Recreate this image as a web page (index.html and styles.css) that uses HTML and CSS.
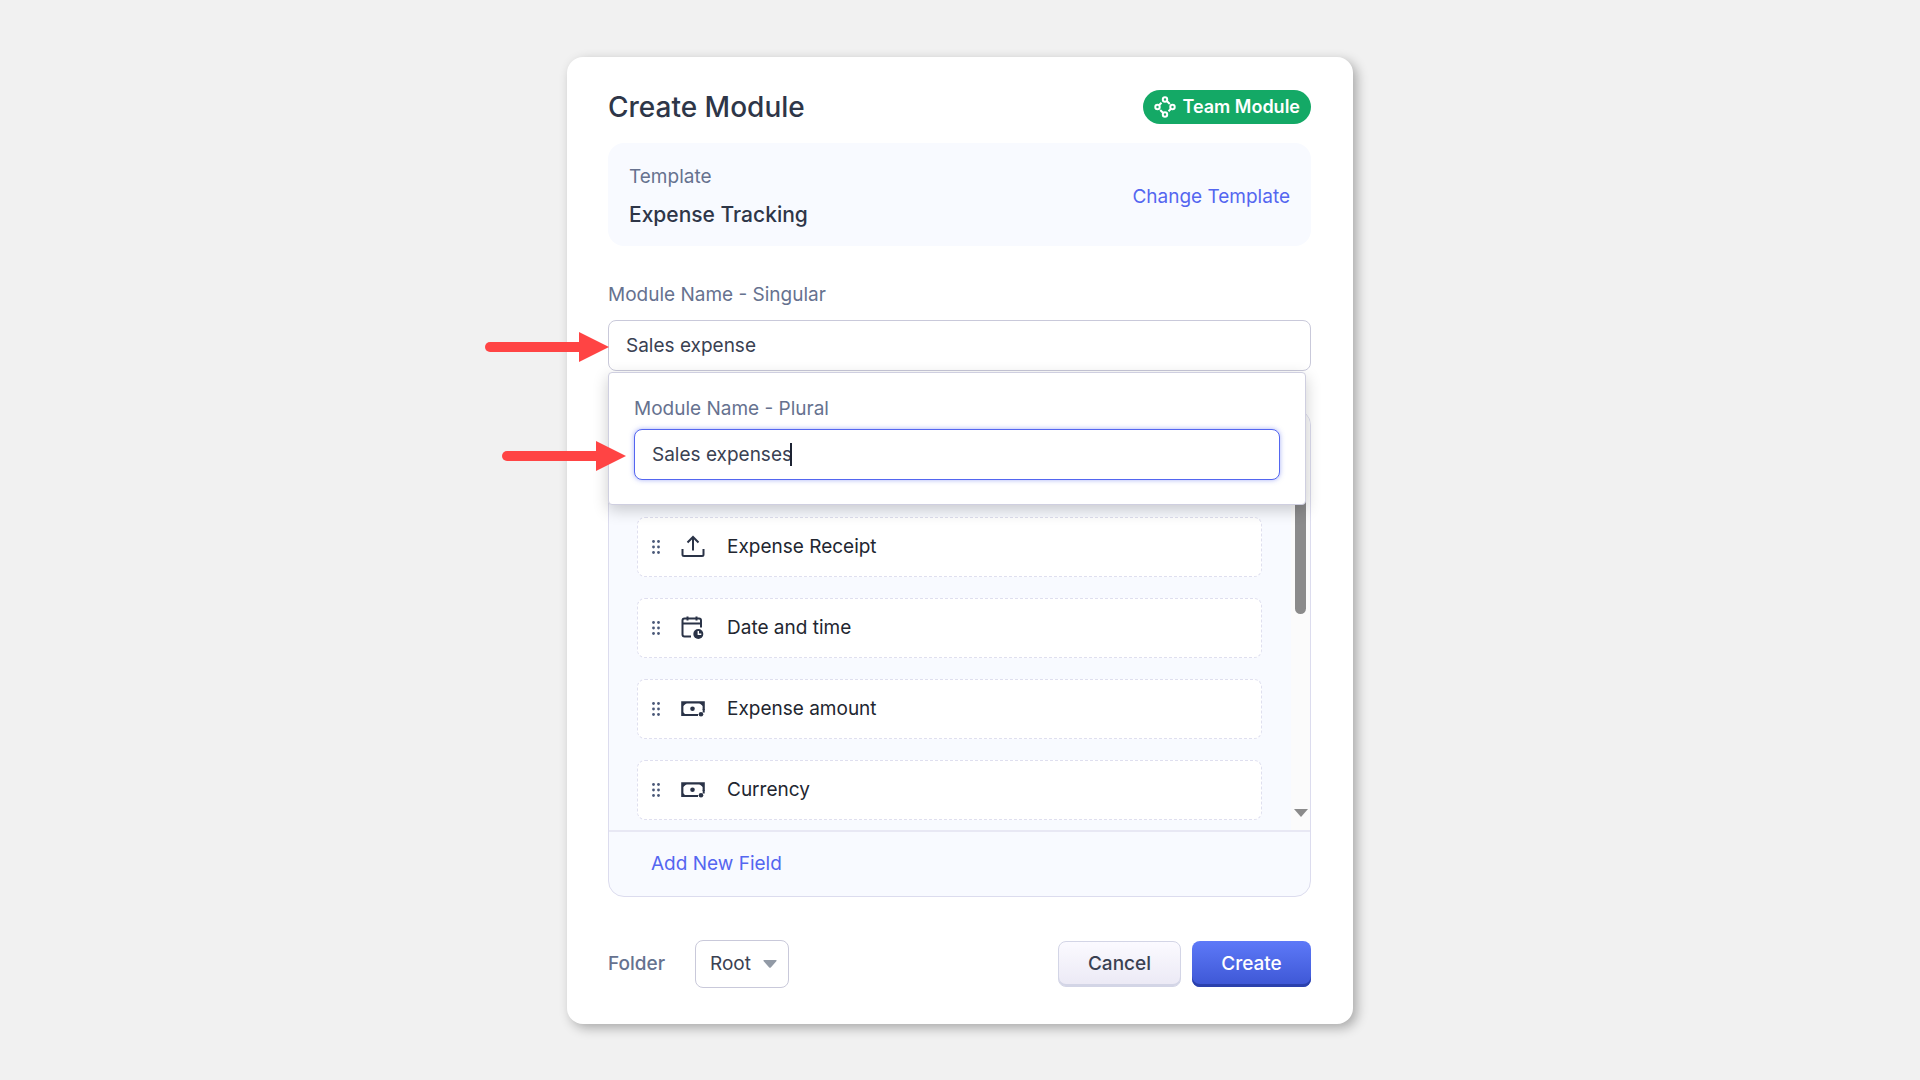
FILE: index.html
```html
<!DOCTYPE html>
<html lang="en">
<head>
  <meta charset="utf-8">
  <meta name="viewport" content="width=device-width, initial-scale=1">
  <title>Create Module</title>
  <link rel="stylesheet" href="styles.css">
</head>
<body>
  <svg class="sprite" aria-hidden="true">
    <symbol id="grip" viewBox="0 0 8 14">
      <circle cx="1.5" cy="1.5" r="1.4"/><circle cx="6.5" cy="1.5" r="1.4"/>
      <circle cx="1.5" cy="7" r="1.4"/><circle cx="6.5" cy="7" r="1.4"/>
      <circle cx="1.5" cy="12.5" r="1.4"/><circle cx="6.5" cy="12.5" r="1.4"/>
    </symbol>
    <symbol id="upload" viewBox="0 0 24 24">
      <path d="M12 15.500V2M6.500 7.500 12 2l5.500 5.500M1.500 14v5.500q0 1.500 1.500 1.500h18q1.500 0 1.500-1.500V14" fill="none" stroke="currentColor" stroke-width="2"/>
    </symbol>
    <symbol id="calendar" viewBox="0 0 24 24">
      <path d="M10 20.500H3.500q-2 0-2-2V4.500q0-2 2-2h14.500q2 0 2 2v7M1.500 7.500H20M6.500 .500v4M15.500 .500v4" fill="none" stroke="currentColor" stroke-width="2"/>
      <circle cx="17.300" cy="18" r="5" fill="currentColor"/>
      <path d="M17.300 15v3.200h3" fill="none" stroke="#fff" stroke-width="1.400"/>
    </symbol>
    <symbol id="cash" viewBox="0 0 24 24">
      <path d="M17 18H1.300V5.300h21.400V13" fill="none" stroke="currentColor" stroke-width="2.200"/>
      <path d="M1 5h6L1 10zM23 5h-6L23 10zM1 19h5L1 14z" fill="currentColor"/>
      <path d="M22.700 12v3.500" stroke="currentColor" stroke-width="2"/>
      <circle cx="11.500" cy="11.700" r="2.300" fill="currentColor"/>
      <circle cx="20" cy="17.200" r="2.300" fill="currentColor"/>
    </symbol>
    <symbol id="arrow" viewBox="0 0 124 30">
      <path d="M5 15h92" stroke="currentColor" stroke-width="10" stroke-linecap="round"/>
      <path d="M94 0l30 15-30 15z" fill="currentColor"/>
    </symbol>
  </svg>

  <main class="dialog">
    <header class="dialog-head">
      <h1 class="title">Create Module</h1>
      <span class="badge">
        <svg class="badge-icon" viewBox="0 0 22 22" aria-hidden="true">
          <g fill="none" stroke="currentColor" stroke-width="2">
            <circle cx="11" cy="3.500" r="2.200"/><circle cx="18.500" cy="11" r="2.200"/>
            <circle cx="11" cy="18.500" r="2.200"/><circle cx="3.500" cy="11" r="2.200"/>
            <path d="M12.800 5 15.800 8M17 12.800 14.500 15.300M9.200 17 6.200 14M5 9.200 7.500 6.700"/>
          </g>
        </svg>
        Team Module
      </span>
    </header>

    <section class="template">
      <div class="template-text">
        <span class="label">Template</span>
        <strong class="template-name">Expense Tracking</strong>
      </div>
      <a class="link" href="#">Change Template</a>
    </section>

    <form class="form">
      <div class="field">
        <label class="label" for="singular">Module Name - Singular</label>
        <div class="control">
          <input class="input" id="singular" type="text" value="Sales expense">
          <svg class="pointer" aria-hidden="true"><use href="#arrow"/></svg>
          <div class="popup">
            <label class="label" for="plural">Module Name - Plural</label>
            <div class="control">
              <input class="input input-active" id="plural" type="text" value="Sales expenses">
              <span class="caret"></span>
              <svg class="pointer pointer-gap" aria-hidden="true"><use href="#arrow"/></svg>
            </div>
          </div>
        </div>
      </div>

      <section class="panel">
        <div class="panel-body">
          <ul class="rows">
            <li class="row"><svg class="grip" aria-hidden="true"><use href="#grip"/></svg><svg class="icon" aria-hidden="true"><use href="#upload"/></svg>Expense Receipt</li>
            <li class="row"><svg class="grip" aria-hidden="true"><use href="#grip"/></svg><svg class="icon" aria-hidden="true"><use href="#calendar"/></svg>Date and time</li>
            <li class="row"><svg class="grip" aria-hidden="true"><use href="#grip"/></svg><svg class="icon" aria-hidden="true"><use href="#cash"/></svg>Expense amount</li>
            <li class="row"><svg class="grip" aria-hidden="true"><use href="#grip"/></svg><svg class="icon" aria-hidden="true"><use href="#cash"/></svg>Currency</li>
          </ul>
          <div class="scrollbar">
            <div class="thumb"></div>
            <svg class="scroll-down" viewBox="0 0 14 8" aria-hidden="true"><path d="M0 0h14L7 8z"/></svg>
          </div>
        </div>
        <div class="panel-foot"><a class="link" href="#">Add New Field</a></div>
      </section>

      <footer class="actions">
        <label class="label folder-label" for="folder">Folder</label>
        <div class="select-wrap">
          <select class="select" id="folder"><option>Root</option></select>
          <svg class="select-arrow" viewBox="0 0 14 8" aria-hidden="true"><path d="M1 0h12q1 0 .500 1L8 7.200q-1 1-2 0L.500 1Q0 0 1 0z"/></svg>
        </div>
        <button class="button cancel" type="button">Cancel</button>
        <button class="button create" type="submit">Create</button>
      </footer>
    </form>
  </main>
</body>
</html>
```
FILE: styles.css
```css
* {
  box-sizing: border-box;
}

body {
  margin: 0;
  padding-top: 1px;
  min-height: 100vh;
  display: flex;
  justify-content: center;
  align-items: center;
  background: #f1f1f1;
  color: #2e3648;
  font-family: Inter, "Liberation Sans", sans-serif;
  font-size: 19px;
  line-height: 24px;
}

.sprite {
  display: none;
}

.dialog {
  width: 100%;
  max-width: 786px;
  padding: 32px 42px 36px 41px;
  border-radius: 16px;
  background: #fff;
  box-shadow: 4px 4px 12px rgba(0, 0, 0, 0.3);
}

.dialog-head {
  display: flex;
  justify-content: space-between;
  align-items: center;
  height: 36px;
}

.title {
  margin: 0;
  font-size: 28px;
  font-weight: 500;
  line-height: 36px;
}

.badge {
  display: flex;
  align-items: center;
  gap: 6px;
  height: 34px;
  padding: 0 11px;
  border-radius: 17px;
  background: #14a966;
  color: #fff;
  font-size: 18px;
  font-weight: 600;
}

.badge-icon {
  width: 22px;
  height: 22px;
}

.template {
  display: flex;
  justify-content: space-between;
  align-items: center;
  margin-top: 18px;
  padding: 22px 21px 18px;
  border-radius: 16px;
  background: #f8faff;
}

.template-text {
  display: flex;
  flex-direction: column;
  gap: 12px;
}

.template-name {
  font-size: 21px;
  font-weight: 500;
  line-height: 27px;
}

.label {
  color: #66728f;
}

.link {
  color: #5466f0;
  text-decoration: none;
}

.field {
  display: flex;
  flex-direction: column;
  gap: 13px;
  margin-top: 37px;
}

.control {
  position: relative;
}

.input {
  display: block;
  width: 100%;
  height: 51px;
  padding: 0 17px;
  border: 1px solid #c9c9da;
  border-radius: 8px;
  outline: none;
  background: #fff;
  color: #3a4152;
  font: inherit;
}

.input-active {
  border-color: #5466f0;
  box-shadow: 0 0 5px rgba(84, 102, 240, 0.5);
}

.caret {
  position: absolute;
  top: 14px;
  left: 156px;
  width: 2px;
  height: 23px;
  background: #1d2333;
}

.pointer {
  position: absolute;
  top: 12px;
  right: 100%;
  width: 124px;
  height: 30px;
  margin-right: -1px;
  color: #ff4444;
}

.pointer-gap {
  margin-right: 8px;
}

.popup {
  position: absolute;
  z-index: 1;
  top: 100%;
  left: 0;
  right: 5px;
  display: flex;
  flex-direction: column;
  gap: 8px;
  margin-top: 1px;
  padding: 24px 25px;
  border: 1px solid #cfcfe0;
  border-radius: 4px;
  background: #fff;
  box-shadow: 0 5px 16px rgba(0, 0, 0, 0.2);
}

.panel {
  margin-top: 38px;
  border: 1px solid #dcdcee;
  border-radius: 16px;
  background: #f8faff;
  overflow: hidden;
}

.panel-body {
  display: flex;
  justify-content: space-between;
}

.rows {
  flex: 1;
  display: flex;
  flex-direction: column;
  gap: 21px;
  margin: 0;
  padding: 107px 29px 10px 28px;
  list-style: none;
}

.row {
  display: flex;
  align-items: center;
  height: 60px;
  padding-left: 14px;
  border: 1px dashed #dfdfef;
  border-radius: 8px;
  background: #fff;
  color: #222630;
}

.grip {
  width: 8px;
  height: 14px;
  margin-right: 21px;
  fill: #4a5878;
}

.icon {
  width: 24px;
  height: 24px;
  margin-right: 22px;
  color: #2a3347;
}

.scrollbar {
  display: flex;
  flex-direction: column;
  justify-content: space-between;
  align-items: center;
  width: 19px;
  padding: 61px 0 13px;
  background: #fbfbfb;
}

.thumb {
  width: 11px;
  height: 143px;
  border-radius: 6px;
  background: #8b8b8b;
}

.scroll-down {
  width: 14px;
  height: 8px;
  fill: #8b8b8b;
}

.panel-foot {
  padding: 20px 42px;
  border-top: 2px solid #e8e8f4;
}

.actions {
  display: flex;
  align-items: center;
  margin-top: 43px;
}

.folder-label {
  margin-right: 30px;
  font-weight: 500;
}

.select-wrap {
  position: relative;
  margin-right: auto;
}

.select {
  display: block;
  appearance: none;
  width: 94px;
  height: 48px;
  padding: 0 14px;
  border: 1px solid #c9c9da;
  border-radius: 8px;
  background: #fff;
  color: #3a4152;
  font: inherit;
}

.select-arrow {
  position: absolute;
  top: 20px;
  right: 12px;
  width: 14px;
  height: 8px;
  fill: #929aa6;
  pointer-events: none;
}

.button {
  min-width: 119px;
  height: 46px;
  padding: 0 29px;
  border-radius: 8px;
  font: inherit;
  font-weight: 500;
}

.cancel {
  margin-right: 11px;
  border: 1px solid #d3d5e6;
  background: linear-gradient(#fbfaff, #ebe9f5);
  box-shadow: inset 0 -2px #d3d5e6;
  color: #3a4152;
}

.create {
  border: 0;
  background: linear-gradient(#5d79f8, #3d56d4);
  box-shadow: inset 0 -3px #2b41ad;
  color: #fff;
}
```
